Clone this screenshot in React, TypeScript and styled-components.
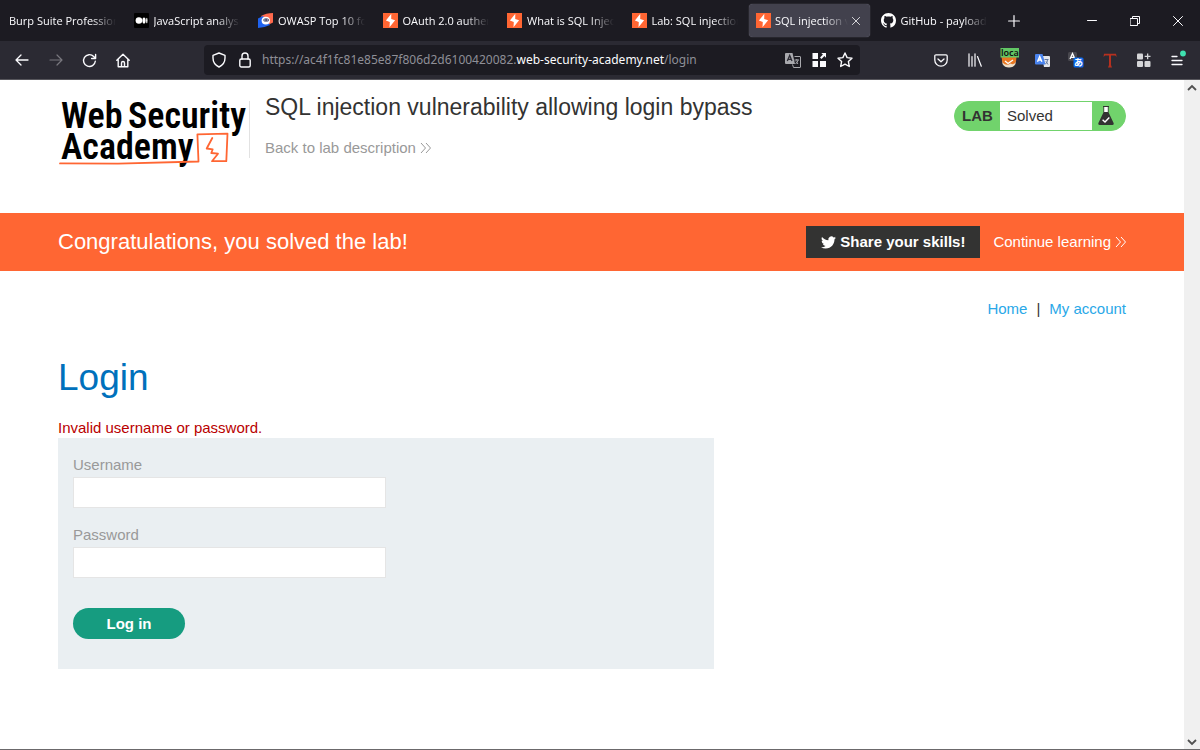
import React from 'react';
import styled, { createGlobalStyle, css } from 'styled-components';

const GlobalStyle = createGlobalStyle`
  *, *::before, *::after { box-sizing: border-box; }
  html, body, #root { height: 100%; }
  body {
    margin: 0;
    background: #fff;
    color: #333332;
    font-family: "Liberation Sans", Arial, sans-serif;
    font-size: 15px;
    line-height: 20px;
  }
  button, input { font: inherit; }
  a { text-decoration: none; }
  svg { display: block; flex: none; }
`;

const Window = styled.div`
  display: flex;
  flex-direction: column;
  min-height: 100%;
  border-bottom: 1px solid #6b696b;
`;

const Chrome = styled.header`
  background: #1c1b22;
  color: #fbfbfe;
  font-family: "Noto Sans", "Open Sans", sans-serif;
  border-bottom: 1px solid #57565c;
`;

const TabStrip = styled.div`
  display: flex;
  align-items: center;
  height: 41px;
  padding: 0 1px 0 2px;
`;

const TabList = styled.div`
  flex: 0 1 992px;
  min-width: 0;
  display: grid;
  grid-template-columns: repeat(8, minmax(0, 1fr));
  gap: 4px;
`;

const Tab = styled.div<{ $active?: boolean }>`
  display: flex;
  align-items: center;
  gap: 5px;
  height: 33px;
  padding: 0 7px;
  border-radius: 4px;
  ${(p) => p.$active && css`
    gap: 4px;
    padding-right: 10px;
    background: #42414d;
    box-shadow: 0 0 1px #8f8f9d;
  `}
`;

const TabLabel = styled.button`
  flex: 1;
  min-width: 0;
  padding: 0;
  border: 0;
  background: none;
  color: inherit;
  font-family: "Open Sans", "Noto Sans", sans-serif;
  font-size: 11px;
  line-height: 20px;
  text-align: left;
  white-space: nowrap;
  overflow: hidden;
  mask-image: linear-gradient(to left, transparent, #000 24px);
`;

const IconButton = styled.button<{ $width: number; $dim?: boolean }>`
  display: flex;
  align-items: center;
  justify-content: center;
  flex: none;
  width: ${(p) => p.$width}px;
  height: 30px;
  padding: 0;
  border: 0;
  background: none;
  color: ${(p) => (p.$dim ? '#78777e' : '#fbfbfe')};
`;

const WindowControls = styled.div`
  display: flex;
  margin-left: auto;
`;

const Toolbar = styled.div`
  display: flex;
  align-items: center;
  height: 38px;
  padding: 0 5px;
  background: #2b2a33;
`;

const AddressBar = styled.div`
  flex: 1;
  display: flex;
  align-items: center;
  min-width: 0;
  height: 30px;
  margin: 0 64px 0 65px;
  padding: 0 2px;
  border-radius: 4px;
  background: #1c1b22;
`;

const Address = styled.div`
  flex: 1;
  min-width: 0;
  padding-left: 4px;
  overflow: hidden;
  white-space: nowrap;
  font-size: 12px;
  color: #8f8f97;
`;

const Host = styled.span`
  color: #fbfbfe;
`;

const Viewport = styled.div`
  flex: 1;
  display: flex;
`;

const Page = styled.main`
  flex: 1;
  min-width: 0;
`;

const ScrollTrack = styled.div`
  display: flex;
  flex-direction: column;
  justify-content: space-between;
  align-items: center;
  width: 16px;
  padding: 4px 0 3px;
  background: #f0f0f0;
  color: #505050;
`;

const Container = styled.div`
  margin: 0 58px;
`;

const LabHeader = styled(Container)`
  display: flex;
  align-items: flex-start;
  height: 133px;
  padding-top: 15px;
`;

const Logo = styled.a`
  width: 192px;
  margin-top: 6px;
  border-right: 1px solid #e2e2e2;
  height: 57px;
`;

const TitleBlock = styled.div`
  flex: 1;
  padding-left: 15px;
`;

const LabTitle = styled.h2`
  margin: 0 0 19px;
  font-size: 23px;
  line-height: 24px;
  font-weight: 400;
`;

const ArrowLink = styled.a<{ $color: string }>`
  display: inline-flex;
  align-items: center;
  gap: 4px;
  color: ${(p) => p.$color};
`;

const LabStatus = styled.div`
  display: flex;
  width: 172px;
  height: 30px;
  margin-top: 6px;
  border: 1px solid #71d36c;
  border-radius: 15px;
  overflow: hidden;
  background: #71d36c;
`;

const StatusTag = styled.strong`
  width: 45px;
  padding-left: 7px;
  line-height: 28px;
`;

const StatusText = styled.span`
  flex: 1;
  padding-left: 7px;
  background: #fff;
  line-height: 28px;
`;

const StatusIcon = styled.span`
  display: flex;
  align-items: center;
  width: 33px;
  padding-left: 6px;
`;

const Banner = styled.section`
  background: #ff6633;
  color: #fff;
`;

const BannerRow = styled(Container)`
  display: flex;
  align-items: center;
  height: 58px;
  gap: 13px;
`;

const BannerText = styled.h3`
  flex: 1;
  margin: 0;
  font-size: 22px;
  line-height: 24px;
  font-weight: 400;
`;

const ShareButton = styled.button`
  display: flex;
  align-items: center;
  gap: 4px;
  height: 32px;
  padding: 0 15px;
  border: 0;
  background: #333332;
  color: #fff;
  font-weight: 700;
`;

const PageNav = styled.nav`
  display: flex;
  justify-content: flex-end;
  gap: 9px;
  padding-top: 28px;
`;

const NavLink = styled.a`
  color: #29a8e8;
`;

const PageTitle = styled.h1`
  margin: 36px 0 17px;
  color: #0071bc;
  font-size: 37px;
  line-height: 46px;
  font-weight: 400;
`;

const ErrorText = styled.p`
  margin: 0;
  color: #b90000;
`;

const LoginForm = styled.form`
  width: 61.4%;
  min-width: 340px;
  padding: 17px 15px 30px;
  background: #eaeff2;
`;

const Field = styled.div`
  display: flex;
  flex-direction: column;
  gap: 2px;
  margin-bottom: 17px;
`;

const FieldLabel = styled.label`
  color: #999;
`;

const TextInput = styled.input`
  width: 50%;
  height: 31px;
  padding: 0 8px;
  border: 1px solid #e5e5e5;
  background: #fff;
  outline: none;
`;

const SubmitButton = styled.button`
  display: block;
  width: 112px;
  height: 31px;
  margin-top: 30px;
  border: 0;
  border-radius: 16px;
  background: #169c80;
  color: #fff;
  font-weight: 700;
`;

const stroke = {
  fill: 'none',
  stroke: 'currentColor',
  strokeLinecap: 'round' as const,
  strokeLinejoin: 'round' as const,
};

const BurpIcon = () => (
  <svg width="15" height="15" viewBox="0 0 15 15">
    <path fill="#ff6633" d="M0 0h15v15H0z" />
    <path fill="#fff" d="M8.300.800 2.900 7.500 6.800 8.900 6.500 14.200 12.100 7.300 8.200 6z" />
  </svg>
);

const MediumIcon = () => (
  <svg width="15" height="15" viewBox="0 0 15 15">
    <rect width="15" height="15" rx="1" fill="#000" />
    <circle cx="4.9" cy="7.5" r="3.3" fill="#fff" />
    <ellipse cx="10" cy="7.5" rx="1.6" ry="3.1" fill="#fff" />
    <ellipse cx="12.8" cy="7.5" rx=".7" ry="2.8" fill="#fff" />
  </svg>
);

const OwaspIcon = () => (
  <svg width="15" height="15" viewBox="0 0 15 15">
    <path fill="#ff6a4d" d="M3 3Q8 0 15 0v9.500L10 12z" />
    <path fill="#1f63f0" d="M0 5.500 5 3l7 9Q7 14.500 0 15z" />
    <ellipse cx="7.8" cy="7.6" rx="4.200" ry="3.900" fill="#fff" />
    <rect x="5.400" y="5.400" width="5.400" height="3.200" rx="1.600" fill="#1d2450" />
    <circle cx="6.900" cy="7" r=".7" fill="#fff" />
    <circle cx="9.200" cy="7" r=".7" fill="#fff" />
  </svg>
);

const GithubIcon = () => (
  <svg width="15" height="15" viewBox="0 0 16 16" fill="#fff">
    <path d="M8 0C3.58 0 0 3.58 0 8c0 3.54 2.29 6.53 5.47 7.59.4.07.55-.17.55-.38 0-.19-.01-.82-.01-1.49-2.01.37-2.53-.49-2.69-.94-.09-.23-.48-.94-.82-1.13-.28-.15-.68-.52-.01-.53.63-.01 1.08.58 1.23.82.72 1.21 1.87.87 2.33.66.07-.52.28-.87.51-1.07-1.78-.2-3.64-.89-3.64-3.95 0-.87.31-1.59.82-2.15-.08-.2-.36-1.02.08-2.12 0 0 .67-.21 2.2.82.64-.18 1.32-.27 2-.27s1.36.09 2 .27c1.53-1.04 2.2-.82 2.2-.82.44 1.1.16 1.92.08 2.12.51.56.82 1.27.82 2.15 0 3.07-1.87 3.75-3.65 3.95.29.25.54.73.54 1.48 0 1.07-.01 1.93-.01 2.2 0 .21.15.46.55.38A8 8 0 0 0 16 8c0-4.42-3.58-8-8-8" />
  </svg>
);

const DoubleChevron = () => (
  <svg width="11" height="12" viewBox="0 0 11 12" {...stroke} strokeLinecap="butt">
    <path d="M1 1l4.500 5L1 11M6 1l4.500 5L6 11" />
  </svg>
);

const Flask = () => (
  <svg width="16" height="20" viewBox="0 0 16 20">
    <path fill="#fff" d="M6 1h4v6H6z" />
    <path fill="#333332" d="M5 0h6v1H5zM5.400 1h.8v5h3.600V1h.8v5.500L15.600 17q.600 2-1.400 2H1.800q-2 0-1.400-2L5.400 6.500z" />
    <path fill="none" stroke="#fff" strokeWidth="1.4" d="M4.600 13.800 7 16l4.300-4.500" />
  </svg>
);

const Twitter = () => (
  <svg width="15" height="15" viewBox="0 0 24 24" fill="#fff">
    <path d="M23.950 4.570a10 10 0 0 1-2.820.770 4.960 4.960 0 0 0 2.160-2.720c-.950.550-2 .950-3.130 1.180a4.920 4.920 0 0 0-8.380 4.480C7.690 8.090 4.070 6.130 1.640 3.160a4.820 4.820 0 0 0-.670 2.470c0 1.710.870 3.210 2.190 4.100a4.900 4.900 0 0 1-2.230-.620v.060a4.920 4.920 0 0 0 3.950 4.830 5 5 0 0 1-2.210.080 4.940 4.940 0 0 0 4.600 3.420A9.870 9.870 0 0 1 0 19.540a14 14 0 0 0 7.550 2.210c9.050 0 14-7.500 14-13.980 0-.210 0-.420-.020-.630a9.940 9.940 0 0 0 2.420-2.570z" />
  </svg>
);

const AcademyLogo = () => (
  <svg width="190" height="68" viewBox="0 0 190 68" overflow="visible">
    <g fill="#000" fontFamily='"Roboto Condensed", "Liberation Sans Narrow", Roboto, sans-serif' fontWeight="600" fontSize="36">
      <text x="3" y="27">Web</text>
      <text x="70" y="27">Security</text>
      <text x="3" y="58">Academy</text>
    </g>
    <path
      fill="none"
      stroke="#ff6633"
      strokeWidth="1.8"
      strokeLinecap="round"
      strokeLinejoin="round"
      d="M2 62.400 60 62.600 140.500 60.500 139.400 33.300 169.500 32.600 168.300 60.200 154 60.200 160 52.700 153.300 52 154.700 48.300 148.700 47.500 154.300 37"
    />
  </svg>
);

const tabs = [
  { title: 'Burp Suite Profession' },
  { title: 'JavaScript analysi', icon: <MediumIcon /> },
  { title: 'OWASP Top 10 fo', icon: <OwaspIcon /> },
  { title: 'OAuth 2.0 authen', icon: <BurpIcon /> },
  { title: 'What is SQL Injec', icon: <BurpIcon /> },
  { title: 'Lab: SQL injection', icon: <BurpIcon /> },
  { title: 'SQL injection v', icon: <BurpIcon />, active: true },
  { title: 'GitHub - payload', icon: <GithubIcon /> },
];

const Close = ({ size }: { size: number }) => (
  <svg width={size} height={size} viewBox="0 0 10 10" {...stroke}>
    <path d="M.5.500l9 9M9.500.500l-9 9" />
  </svg>
);

const BrowserTabs = () => (
  <TabStrip>
    <TabList>
      {tabs.map((tab) => (
        <Tab key={tab.title} $active={tab.active}>
          {tab.icon}
          <TabLabel type="button">{tab.title}</TabLabel>
          {tab.active && (
            <IconButton type="button" $width={8} aria-label="Close tab"><Close size={8} /></IconButton>
          )}
        </Tab>
      ))}
    </TabList>
    <IconButton type="button" $width={40} aria-label="New tab">
      <svg width="12" height="12" viewBox="0 0 12 12" {...stroke} strokeWidth="1.2"><path d="M6 .6v10.800M.6 6h10.800" /></svg>
    </IconButton>
    <WindowControls>
      <IconButton type="button" $width={43} aria-label="Minimize">
        <svg width="10" height="10" viewBox="0 0 10 10" {...stroke}><path d="M.5 4.500h9" /></svg>
      </IconButton>
      <IconButton type="button" $width={43} aria-label="Restore">
        <svg width="10" height="10" viewBox="0 0 10 10" {...stroke}><path d="M.5 2.500h7v7h-7zM2.500 2.500v-2h7v7h-2" /></svg>
      </IconButton>
      <IconButton type="button" $width={43} aria-label="Close window"><Close size={10} /></IconButton>
    </WindowControls>
  </TabStrip>
);

const BrowserToolbar = () => (
  <Toolbar>
    <IconButton type="button" $width={34} aria-label="Back">
      <svg width="14" height="12" viewBox="0 0 14 12" {...stroke} strokeWidth="1.3"><path d="M13 6H1M6 1 1 6l5 5" /></svg>
    </IconButton>
    <IconButton type="button" $width={33} $dim aria-label="Forward">
      <svg width="14" height="12" viewBox="0 0 14 12" {...stroke} strokeWidth="1.2"><path d="M1 6h12M8 1l5 5-5 5" /></svg>
    </IconButton>
    <IconButton type="button" $width={34} aria-label="Reload">
      <svg width="15" height="15" viewBox="0 0 15 15" {...stroke} strokeWidth="1.400"><path d="M13.300 8.200A5.900 5.900 0 1 1 11.700 3.500L13.200 5M13.600 1.500v4H9.600" /></svg>
    </IconButton>
    <IconButton type="button" $width={33} aria-label="Home page">
      <svg width="14" height="15" viewBox="0 0 14 15" {...stroke} strokeWidth="1.400"><path d="M.8 7.200 7 1.200l6.200 6M2.200 6.500v7.300h9.600V6.500M5.500 13.500V10a1.500 1.500 0 0 1 3 0v3.500" /></svg>
    </IconButton>
    <AddressBar>
      <IconButton type="button" $width={26} aria-label="Tracking protection">
        <svg width="14" height="16" viewBox="0 0 14 16" {...stroke} strokeWidth="1.400"><path d="M7 1l6 2.300v2.700c0 4-2.200 7.200-6 9-3.800-1.800-6-5-6-9V3.300z" /></svg>
      </IconButton>
      <IconButton type="button" $width={26} aria-label="Site security">
        <svg width="12" height="16" viewBox="0 0 12 16" {...stroke} strokeWidth="1.400"><rect x=".8" y="7" width="10.400" height="8" rx="1.500" /><path d="M3 7V4a3 3 0 0 1 6 0v3" /></svg>
      </IconButton>
      <Address>https://ac4f1fc81e85e87f806d2d6100420082.<Host>web-security-academy.net</Host>/login</Address>
      <IconButton type="button" $width={27} aria-label="Translate page">
        <svg width="16" height="15" viewBox="0 0 16 15" fill="none"><path fill="#a9a9ae" d="M1 0h6.500l2.500 11H1q-1 0-1-1V1q0-1 1-1z" /><path stroke="#2b2a33" strokeWidth="1.300" d="M2.300 8 4.700 2.500 7 8M3 6.300h3.200" /><path stroke="#a9a9ae" d="M9.500 3.500H15q.500 0 .500.500v10q0 .500-.500.500H8.500L7.500 11.500M9.500 7H14M11.800 6v1.500M13 7.300q-.500 2-2.500 3.700M11 8.500l2 2.500" /></svg>
      </IconButton>
      <IconButton type="button" $width={26} aria-label="Page apps">
        <svg width="14" height="14" viewBox="0 0 14 14" fill="#fbfbfe"><path d="M.5 0H6v6H.5zM.5 8H6v6H.5zM8 8h6v6H8z" /><path d="M9.300 0H14v4.700l-1.600-1.600L9.500 6 8 4.500l2.900-2.900z" /></svg>
      </IconButton>
      <IconButton type="button" $width={26} aria-label="Bookmark">
        <svg width="16" height="16" viewBox="0 0 16 16" {...stroke} strokeWidth="1.400"><path d="M8 1l2.100 4.600 4.900.600-3.600 3.400.900 4.900L8 12.100l-4.300 2.400.900-4.900L1 6.200l4.900-.600z" /></svg>
      </IconButton>
    </AddressBar>
    <IconButton type="button" $width={34} aria-label="Pocket">
      <svg width="14" height="13" viewBox="0 0 14 13" {...stroke} strokeWidth="1.300"><path d="M2 .8h10q1.200 0 1.200 1.200v4a6.200 6.200 0 0 1-12.400 0V2Q.8.800 2 .8zM4 5l3 2.800L10 5" /></svg>
    </IconButton>
    <IconButton type="button" $width={34} aria-label="Library">
      <svg width="14" height="14" viewBox="0 0 14 14" {...stroke} strokeWidth="1.200"><path d="M1 .8v12.400M4 3.500v9.700M7 .8v12.400M9.500 3.500l3.800 9.700" /></svg>
    </IconButton>
    <IconButton type="button" $width={34} aria-label="Local proxy">
      <svg width="20" height="24" viewBox="0 0 20 24" overflow="visible">
        <path fill="#efdfc8" d="M3 9h14l-.5 7q-2 3.500-6.500 3.500T3.500 16z" />
        <path fill="#e87722" d="M2.500 9h15l-.5 4.500q-2 4-5.500 2-4 3-8-1z" />
        <path fill="none" stroke="#fff" strokeWidth="1.300" d="M6 13l3 2.500 5-3.500" />
        <path fill="#62c765" d="M1.500 0H20v9.500H1.500z" />
        <text x="2" y="8" fontSize="9" fontWeight="600" fill="#111" fontFamily='"Noto Sans", sans-serif'>loca</text>
      </svg>
    </IconButton>
    <IconButton type="button" $width={33} aria-label="Translate">
      <svg width="15" height="15" viewBox="0 0 15 15" fill="none"><path fill="#e4e6eb" d="M7 3h7q1 0 1 1v9q0 1-1 1H9z" /><path fill="#4a83ee" d="M1 1h6.500l3 10.500H1q-1 0-1-1V2q0-1 1-1z" /><path stroke="#fff" strokeWidth="1.400" d="M2.500 8.800 4.700 3.500l2.200 5.300M3.300 7h2.800" /><path stroke="#60779e" d="M9.500 6.500h4M12.500 6.500q0 3-2 4.500M11 8.500l2 3" /></svg>
    </IconButton>
    <IconButton type="button" $width={34} aria-label="Japanese translation">
      <svg width="16" height="16" viewBox="0 0 16 16"><rect width="9" height="9" rx="1.500" fill="#49484f" /><path fill="none" stroke="#fff" strokeWidth="1.300" d="M2 7 4.500 1.500 7 7M2.800 5.300h3.400" /><rect x="5.500" y="5.500" width="10" height="10" rx="1.500" fill="#0a66ea" /><text x="6" y="14" fontSize="9" fontWeight="700" fill="#fff" fontFamily='"Noto Sans CJK JP", sans-serif'>あ</text></svg>
    </IconButton>
    <IconButton type="button" $width={34} aria-label="Text tool">
      <svg width="14" height="15" viewBox="0 0 14 15"><path fill="#b6301f" d="M1 .8h12l.700 3.200-1.500-1.400H8V12l1 2.500H5L6 12V2.600H2L.5 4z" /></svg>
    </IconButton>
    <IconButton type="button" $width={34} aria-label="Extensions">
      <svg width="14" height="14" viewBox="0 0 14 14" fill="#d5d5d8"><rect y=".5" width="6" height="6" rx="1" /><rect y="8" width="6" height="6" rx="1" /><rect x="7.500" y="8" width="6" height="6" rx="1" /><path d="M10 .5h1.300v2.200h2.200V4h-2.200v2.300H10V4H7.700V2.700H10z" /></svg>
    </IconButton>
    <IconButton type="button" $width={34} aria-label="Application menu">
      <svg width="14" height="20" viewBox="0 0 14 20" overflow="visible" {...stroke} strokeWidth="1.300"><path d="M1 6.500h5M1 10.500h10M1 14.500h10" /><circle cx="12" cy="3.500" r="2.900" fill="#3fe1b0" stroke="none" /></svg>
    </IconButton>
  </Toolbar>
);

const ScrollArrow = ({ d }: { d: string }) => (
  <svg width="10" height="7" viewBox="0 0 10 7" fill="none" stroke="currentColor" strokeWidth="1.800"><path d={d} /></svg>
);

export default function App() {
  return (
    <>
      <GlobalStyle />
      <Window>
        <Chrome>
          <BrowserTabs />
          <BrowserToolbar />
        </Chrome>
        <Viewport>
          <Page>
            <LabHeader>
              <Logo href="#" aria-label="Web Security Academy"><AcademyLogo /></Logo>
              <TitleBlock>
                <LabTitle>SQL injection vulnerability allowing login bypass</LabTitle>
                <ArrowLink href="#" $color="#999">Back to lab description<DoubleChevron /></ArrowLink>
              </TitleBlock>
              <LabStatus>
                <StatusTag>LAB</StatusTag>
                <StatusText>Solved</StatusText>
                <StatusIcon><Flask /></StatusIcon>
              </LabStatus>
            </LabHeader>
            <Banner>
              <BannerRow>
                <BannerText>Congratulations, you solved the lab!</BannerText>
                <ShareButton type="button"><Twitter />Share your skills!</ShareButton>
                <ArrowLink href="#" $color="#fff">Continue learning<DoubleChevron /></ArrowLink>
              </BannerRow>
            </Banner>
            <Container>
              <PageNav>
                <NavLink href="#">Home</NavLink>
                <span>|</span>
                <NavLink href="#">My account</NavLink>
              </PageNav>
              <PageTitle>Login</PageTitle>
              <ErrorText>Invalid username or password.</ErrorText>
              <LoginForm onSubmit={(e) => e.preventDefault()}>
                <Field>
                  <FieldLabel htmlFor="username">Username</FieldLabel>
                  <TextInput id="username" type="text" />
                </Field>
                <Field>
                  <FieldLabel htmlFor="password">Password</FieldLabel>
                  <TextInput id="password" type="password" />
                </Field>
                <SubmitButton type="submit">Log in</SubmitButton>
              </LoginForm>
            </Container>
          </Page>
          <ScrollTrack>
            <ScrollArrow d="M1 6l4-4 4 4" />
            <ScrollArrow d="M1 1l4 4 4-4" />
          </ScrollTrack>
        </Viewport>
      </Window>
    </>
  );
}
